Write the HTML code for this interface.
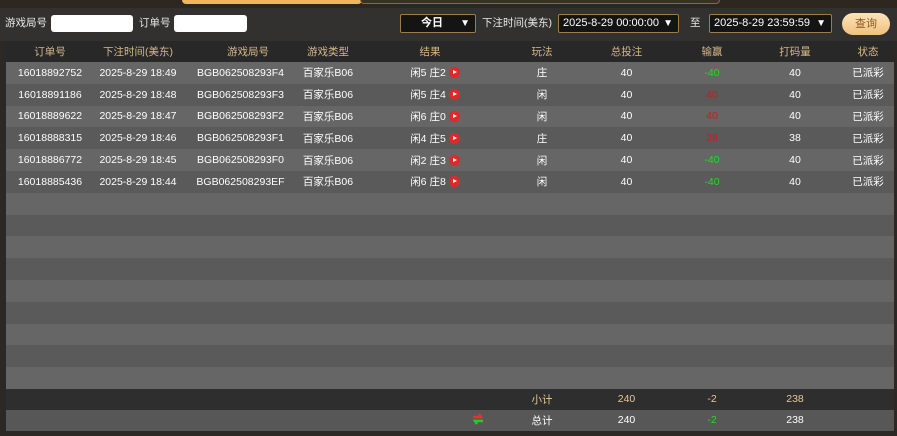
<!DOCTYPE html><html><head><meta charset="utf-8"><style>
*{margin:0;padding:0;box-sizing:border-box}
body{width:897px;height:436px;background:#2b2825;font-family:"Liberation Sans","Noto Sans CJK SC",sans-serif;font-size:11px;color:#fff;position:relative;overflow:hidden}
.top{position:absolute;left:0;top:0;width:897px;height:8px;background:#2e2720}
.tab{position:absolute;left:182px;top:0;width:180px;height:4px;background:#f3b55a;border-radius:0 0 6px 6px}
.tab2{position:absolute;left:360px;top:0;width:360px;height:4px;border:1px solid #8a6a3a;border-top:none;border-radius:0 0 5px 5px;background:#3a2f24}
.bar{position:absolute;left:0;top:8px;width:897px;height:33px;background:#333130}
.lbl{position:absolute;top:15px;font-size:10.5px;color:#e8e8e8}
.inp{position:absolute;top:15px;height:17px;background:#fff;border-radius:3px}
.sel{position:absolute;top:14px;height:19px;background:#141414;border:1px solid #9c7c4a;border-radius:2px;color:#fff;font-size:11px;line-height:17px;padding-left:4px}
.sel i{position:absolute;right:5px;top:0;font-style:normal;font-size:10px}
.btn{position:absolute;left:842px;top:13px;width:48px;height:22px;border-radius:11px;background:linear-gradient(#fde4b8,#f0c080);color:#8a5a20;text-align:center;line-height:22px;font-size:11px}
table{position:absolute;left:6px;top:41px;width:888px;border-collapse:collapse;table-layout:fixed}
td{text-align:center;height:21.8px;padding:0;white-space:nowrap;font-size:10.5px}
td:nth-child(2){padding-right:11px}
td:nth-child(3){padding-left:0}
tr.h td:nth-child(3){padding-left:15px}
td:nth-child(4){padding-right:11px}
td:nth-child(5){padding-left:5px}
tr.h td:nth-child(5){padding-left:0;padding-right:5px}
td:nth-child(6){padding-left:14px}
td:nth-child(8){padding-left:2px}
td:nth-child(9){padding-left:6px}
td:nth-child(10){padding-left:11px}
tr.h td{background:#282828;color:#d6b888;height:21px}
tr.a td{background:#666}
tr.b td{background:#5a5a5a}
.g{color:#22dd22}.r{color:#c81c1c}
.p{display:inline-block;width:11px;height:11px;border-radius:50%;background:#e02828;vertical-align:-2px;margin-left:3px;position:relative}
.p:after{content:"";position:absolute;left:4px;top:3px;border-left:4px solid #fff;border-top:2.5px solid transparent;border-bottom:2.5px solid transparent}
tr.s td{background:#2e2e2e;color:#e4c79a;height:21px}
tr.t td{background:#575757;height:21px}
</style></head><body>
<div class="top"></div><div class="tab"></div><div class="tab2"></div>
<div class="bar"></div>
<div class="lbl" style="left:5px">游戏局号</div><div class="inp" style="left:51px;width:82px"></div>
<div class="lbl" style="left:139px">订单号</div><div class="inp" style="left:174px;width:73px"></div>
<div class="sel" style="left:400px;width:76px;font-weight:bold;text-align:center;padding-right:16px">今日<i>▼</i></div>
<div class="lbl" style="left:482px">下注时间(美东)</div>
<div class="sel" style="left:558px;width:121px">2025-8-29 00:00:00<i>▼</i></div>
<div class="lbl" style="left:690px">至</div>
<div class="sel" style="left:709px;width:123px">2025-8-29 23:59:59<i>▼</i></div>
<div class="btn">查询</div>
<table>
<colgroup><col style="width:88px"><col style="width:99px"><col style="width:95px"><col style="width:91px"><col style="width:107px"><col style="width:98px"><col style="width:85px"><col style="width:84px"><col style="width:78px"><col style="width:63px"></colgroup>
<tr class="h"><td>订单号</td><td>下注时间(美东)</td><td>游戏局号</td><td>游戏类型</td><td>结果</td><td>玩法</td><td>总投注</td><td>输赢</td><td>打码量</td><td>状态</td></tr>
<tr class="a"><td>16018892752</td><td>2025-8-29 18:49</td><td>BGB062508293F4</td><td>百家乐B06</td><td>闲5 庄2<span class="p"></span></td><td>庄</td><td>40</td><td class="g">-40</td><td>40</td><td>已派彩</td></tr>
<tr class="b"><td>16018891186</td><td>2025-8-29 18:48</td><td>BGB062508293F3</td><td>百家乐B06</td><td>闲5 庄4<span class="p"></span></td><td>闲</td><td>40</td><td class="r">40</td><td>40</td><td>已派彩</td></tr>
<tr class="a"><td>16018889622</td><td>2025-8-29 18:47</td><td>BGB062508293F2</td><td>百家乐B06</td><td>闲6 庄0<span class="p"></span></td><td>闲</td><td>40</td><td class="r">40</td><td>40</td><td>已派彩</td></tr>
<tr class="b"><td>16018888315</td><td>2025-8-29 18:46</td><td>BGB062508293F1</td><td>百家乐B06</td><td>闲4 庄5<span class="p"></span></td><td>庄</td><td>40</td><td class="r">38</td><td>38</td><td>已派彩</td></tr>
<tr class="a"><td>16018886772</td><td>2025-8-29 18:45</td><td>BGB062508293F0</td><td>百家乐B06</td><td>闲2 庄3<span class="p"></span></td><td>闲</td><td>40</td><td class="g">-40</td><td>40</td><td>已派彩</td></tr>
<tr class="b"><td>16018885436</td><td>2025-8-29 18:44</td><td>BGB062508293EF</td><td>百家乐B06</td><td>闲6 庄8<span class="p"></span></td><td>闲</td><td>40</td><td class="g">-40</td><td>40</td><td>已派彩</td></tr>
<tr class="a"><td colspan="10"></td></tr><tr class="b"><td colspan="10"></td></tr>
<tr class="a"><td colspan="10"></td></tr><tr class="b"><td colspan="10"></td></tr>
<tr class="a"><td colspan="10"></td></tr><tr class="b"><td colspan="10"></td></tr>
<tr class="a"><td colspan="10"></td></tr><tr class="b"><td colspan="10"></td></tr>
<tr class="a"><td colspan="10"></td></tr>
<tr class="s"><td></td><td></td><td></td><td></td><td></td><td>小计</td><td>240</td><td class="g">-2</td><td>238</td><td></td></tr>
<tr class="t"><td></td><td></td><td></td><td></td><td style="text-align:right;padding:0 2px 0 0"><svg width="12" height="14" viewBox="0 0 12 14"><path d="M1 5h8l-2-3" stroke="#e83030" stroke-width="2.5" fill="none"/><path d="M11 9H3l2 3" stroke="#22cc22" stroke-width="2.5" fill="none"/></svg></td><td>总计</td><td>240</td><td class="g">-2</td><td>238</td><td></td></tr>
</table>
</body></html>
